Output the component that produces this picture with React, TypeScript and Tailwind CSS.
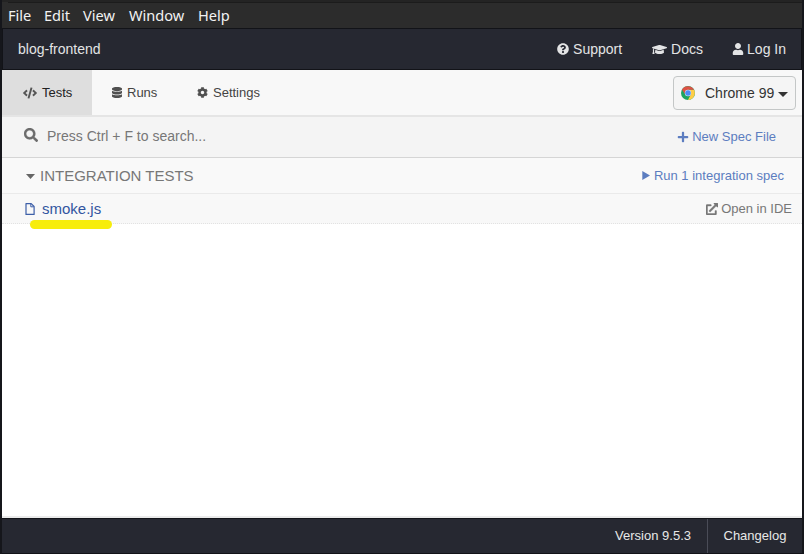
import { FaCode, FaDatabase, FaCog, FaQuestionCircle, FaGraduationCap, FaUser, FaSearch, FaPlus, FaExternalLinkAlt } from 'react-icons/fa';
import type { ReactNode } from 'react';

function MenuBar() {
  return (
    <div className="h-[28px] shrink-0 border-t-2 border-[#242424] bg-[#2c2c2c] pl-[6px]">
      <div className="flex h-[26px] items-center border-t border-[#1c1c1c] font-['Noto_Sans',sans-serif] text-[14.6px] text-[#f2f2f2]">
        <span className="w-[36px]">File</span>
        <span className="w-[39px]">Edit</span>
        <span className="w-[46px]">View</span>
        <span className="w-[69px]">Window</span>
        <span>Help</span>
      </div>
    </div>
  );
}

function Chrome() {
  return (
    <svg viewBox="0 0 48 48" className="size-[14px]">
      <circle cx="24" cy="24" r="24" fill="#1da462" />
      <path d="M24 13 H44.8 A24 24 0 0 1 24 48 L33.5 29.5 Z" fill="#ffcd46" />
      <path d="M24 13 H44.8 A24 24 0 0 0 3.2 12 L14.5 29.5 Z" fill="#dd5144" />
      <circle cx="24" cy="24" r="11" fill="#dfe8f8" />
      <circle cx="24" cy="24" r="9.5" fill="#4c8bf5" />
    </svg>
  );
}

function Caret({ className }: { className: string }) {
  return (
    <svg viewBox="0 0 10 5" preserveAspectRatio="none" className={className}>
      <path d="M0 0h10L5 5z" fill="currentColor" />
    </svg>
  );
}

function FileIcon() {
  return (
    <svg viewBox="0 0 10 12" fill="none" stroke="currentColor" className="h-[12px] w-[10px] text-[#3d5fa8]">
      <path d="M1 .6h5.2l2.9 2.9v7.9H1z" strokeWidth="1.2" strokeLinejoin="round" />
      <path d="M5.8 .8v3h3" />
    </svg>
  );
}

function Tab({ icon, label, className }: { icon: ReactNode; label: string; className: string }) {
  return (
    <div className={`flex h-[45px] items-center text-[13px] ${className}`}>
      {icon}
      <span>{label}</span>
    </div>
  );
}

export default function App() {
  return (
    <div className="flex h-[554px] w-[804px] flex-col overflow-hidden border-x-2 border-[#15161b] bg-white font-['Liberation_Sans',Arial,sans-serif]">
      <MenuBar />
      <header className="flex h-[42px] shrink-0 items-center border border-[#121318] bg-[#262831] pr-[15px] pl-[15px] text-[14px] text-[#e3e4e5]">
        <span className="flex-1">blog-frontend</span>
        <span className="flex w-[95px] items-center">
          <FaQuestionCircle className="mr-[4px] size-[12px]" />
          Support
        </span>
        <span className="flex w-[80px] items-center">
          <FaGraduationCap className="mr-[4px] size-[15px]" />
          Docs
        </span>
        <span className="flex items-center">
          <FaUser className="mr-[3px] h-[12px] w-[12px]" />
          Log In
        </span>
      </header>

      <nav className="flex h-[47px] shrink-0 border-b-2 border-[#e5e5e5] bg-[#f8f8f8] text-[#444]">
        <Tab className="w-[90px] bg-[#dedede] pl-[21px] text-[#222]" icon={<FaCode className="mr-[5px] size-[14px] text-[#555]" />} label="Tests" />
        <Tab className="w-[85px] pl-[20px]" icon={<FaDatabase preserveAspectRatio="none" className="mr-[5px] h-[11px] w-[10px] text-[#505050]" />} label="Runs" />
        <Tab className="w-[110px] pl-[20px]" icon={<FaCog className="mr-[5px] size-[11px] text-[#505050]" />} label="Settings" />
        <div className="flex-1" />
        <button className="mt-[6px] mr-[6px] flex h-[34px] w-[123px] items-center rounded-[4px] border border-[#c4c7c7] bg-[#f5f5f5] pl-[7px] text-[14px] text-[#333]">
          <Chrome />
          <span className="ml-[10px] whitespace-nowrap">Chrome 99</span>
          <Caret className="mt-[2px] ml-[4px] h-[5px] w-[10px]" />
        </button>
      </nav>

      <div className="flex h-[41px] shrink-0 items-center border-b border-[#d5d5d5] bg-[#f4f4f4] pr-[26px] pl-[22px]">
        <FaSearch className="mb-[4px] size-[14px] text-[#6c6c6c]" stroke="currentColor" strokeWidth={10} />
        <span className="mb-[2px] ml-[9px] flex-1 text-[14px] text-[#777]">Press Ctrl + F to search...</span>
        <span className="flex items-center text-[13px] text-[#5c7dc0]">
          <FaPlus className="mr-[3px] size-[12px]" />
          New Spec File
        </span>
      </div>

      <div className="flex h-[36px] shrink-0 items-center border-b border-[#eaeaea] bg-[#f9f9f9] pr-[18px] pl-[24px]">
        <Caret className="mt-px h-[5px] w-[9px] text-[#666]" />
        <span className="mt-px ml-[5px] flex-1 text-[15px] text-[#777]">INTEGRATION TESTS</span>
        <span className="flex items-center text-[13px] text-[#5c7dc0]">
          <svg viewBox="0 0 8 9" className="mr-[4px] h-[9px] w-[8px]">
            <path d="M.3 0L8 4.5.3 9z" fill="currentColor" />
          </svg>
          Run 1 integration spec
        </span>
      </div>

      <div className="flex h-[30px] shrink-0 items-center border-b border-dotted border-[#e2e2e2] bg-[#f8f8f8] pr-[10px] pl-[23px]">
        <FileIcon />
        <div className="relative mt-[2px] ml-[7px] flex-1 text-[15px] text-[#3255a0]">
          smoke.js
          <span className="absolute top-[22px] left-[-12px] h-[9px] w-[82px] rounded-full bg-[#f7ed0b]" />
        </div>
        <span className="flex items-center text-[13px] text-[#777]">
          <FaExternalLinkAlt className="mr-[3px] size-[12px]" stroke="currentColor" strokeWidth={18} />
          Open in IDE
        </span>
      </div>

      <main className="flex-1 bg-white" />

      <footer className="flex h-[38px] shrink-0 border-t-2 border-[#ebebeb] text-[13px] text-[#e8e8e8]">
        <div className="flex flex-1 justify-end border-y border-[#121318] bg-[#262831]">
          <span className="flex items-center border-r border-[#4a4c57] pr-[16px]">Version 9.5.3</span>
          <span className="flex w-[94px] items-center pl-[15.5px]">Changelog</span>
        </div>
      </footer>
    </div>
  );
}
